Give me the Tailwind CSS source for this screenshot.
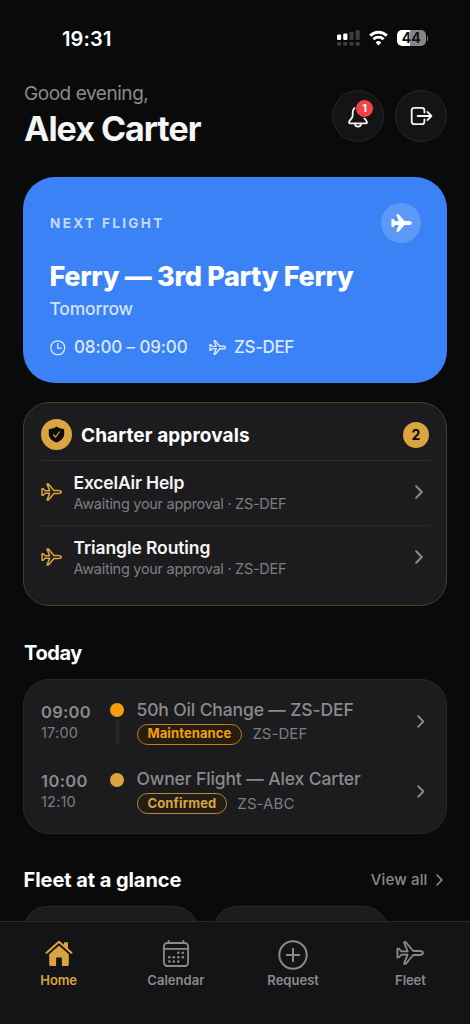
<!DOCTYPE html>
<html lang="en">
<head>
<meta charset="utf-8">
<meta name="viewport" content="width=device-width, initial-scale=1">
<title>Home</title>
<script src="https://cdn.jsdelivr.net/npm/@tailwindcss/browser@4"></script>
</head>
<body class="bg-[#0a0a0a] font-['Inter',sans-serif] text-white antialiased">
<svg class="hidden">
  <symbol id="plane" viewBox="0 0 28 24"><path d="M1.4 7.6H2.8L5.4 10.3H11.6L8 1.2H9.9L17.2 10H23.2C25.6 10.1 27 11 27 12S25.6 13.9 23.2 14H17.2L9.9 22.8H8L11.6 13.7H5.4L2.8 16.4H1.4V12Z" stroke-linejoin="round"/></symbol>
  <symbol id="chev" viewBox="0 0 8 14"><path d="M1.2 1.2L6.8 7L1.2 12.8" fill="none" stroke="currentColor" stroke-width="2" stroke-linecap="round" stroke-linejoin="round"/></symbol>
</svg>
<div class="flex h-[1024px] w-[470px] flex-col overflow-hidden">

  <!-- Status bar -->
  <div class="flex h-[76px] shrink-0 items-center justify-between pr-[42px] pl-[62px]">
    <span class="pt-px text-[20px] leading-6 font-semibold tracking-[0.16px]">19:31</span>
    <div class="flex items-center">
      <svg class="mr-[9px] h-4 w-[23px]" viewBox="0 0 23 16">
        <g fill="#fff"><rect x="0" y="4.5" width="4.2" height="5.5" rx="1.2"/><rect x="6.2" y="3.4" width="4.2" height="6.6" rx="1.2"/></g>
        <g fill="#3c3c3c"><rect x="12.4" y="1.8" width="4.2" height="8.2" rx="1.2"/><rect x="18.6" y="0" width="4.2" height="10" rx="1.2"/><rect x="0" y="12" width="4.2" height="3.8" rx="1.2"/><rect x="6.2" y="12" width="4.2" height="3.8" rx="1.2"/><rect x="12.4" y="12" width="4.2" height="3.8" rx="1.2"/><rect x="18.6" y="12" width="4.2" height="3.8" rx="1.2"/></g>
      </svg>
      <svg class="mr-[9px] h-4 w-[19px]" viewBox="0 0 19 16" fill="none" stroke="#fff" stroke-width="2.9"><path d="M1.2 5.6A11.8 11.8 0 0 1 17.8 5.6"/><path d="M4.4 9.2A7.3 7.3 0 0 1 14.6 9.2"/><path d="M9.5 15.6L6.7 12.4A4 4 0 0 1 12.3 12.4Z" fill="#fff" stroke="none"/></svg>
      <div class="flex h-4 w-[28.5px] items-center justify-center rounded-[5px] bg-linear-to-r from-white from-45% to-[#868686] to-45% text-[14px] leading-4 font-bold text-[#111]">44</div>
      <div class="ml-[1px] h-[5px] w-[1.5px] rounded-r-full bg-[#777]"></div>
    </div>
  </div>

  <main class="flex min-h-0 flex-1 flex-col overflow-hidden px-[23px]">
    <!-- Greeting -->
    <header class="flex h-[79px] shrink-0 items-start justify-between">
      <div class="pt-[6px] pl-px">
        <p class="text-[19px] leading-6 tracking-[-0.45px] text-[#8a8a8d]">Good evening,</p>
        <h1 class="text-[34px] leading-[46px] font-bold tracking-[-1px] text-[#f5f5f5]">Alex Carter</h1>
      </div>
      <div class="flex gap-[11px] pt-[14px]">
        <button class="relative flex size-[52px] items-center justify-center rounded-full border border-[#262628] bg-[#141416]">
          <svg class="size-6" viewBox="0 0 24 24" fill="none" stroke="#f5f5f5" stroke-width="1.8" stroke-linecap="round" stroke-linejoin="round"><path d="M12 3.2C8.4 3.2 6.7 5.8 6.7 9V11.6C6.7 14.4 3 16.2 3 18.4C3 19 3.4 19.3 4 19.3H20C20.6 19.3 21 19 21 18.4C21 16.2 17.3 14.4 17.3 11.6V9C17.3 5.8 15.6 3.2 12 3.2Z"/><path d="M9 19.6C9 21.5 10.3 22.7 12 22.7S15 21.5 15 19.6"/></svg>
          <span class="absolute top-[8px] left-[22px] flex size-[19px] items-center justify-center rounded-full border border-[#141416] bg-[#ef4444] text-[11px] leading-none font-bold">1</span>
        </button>
        <button class="flex size-[52px] items-center justify-center rounded-full border border-[#262628] bg-[#141416]">
          <svg class="size-6" viewBox="0 0 24 24" fill="none" stroke="#f5f5f5" stroke-width="1.8" stroke-linecap="round" stroke-linejoin="round"><path d="M15.4 8.6V6.2A2.4 2.4 0 0 0 13 3.8H5.1A2.4 2.4 0 0 0 2.7 6.2V17.8A2.4 2.4 0 0 0 5.1 20.2H13A2.4 2.4 0 0 0 15.4 17.8V15.4"/><path d="M8.6 12H22.2M18.4 7.9L22.4 12L18.4 16.1"/></svg>
        </button>
      </div>
    </header>

    <!-- Next flight -->
    <section class="mt-[22px] flex h-[206px] shrink-0 flex-col rounded-[32px] bg-[#3b82f6] pt-[26px] pr-[26px] pl-[27px]">
      <div class="flex h-10 items-center justify-between">
        <span class="text-[13.5px] font-bold tracking-[2.35px] text-[#c3dafc]">NEXT FLIGHT</span>
        <span class="flex size-10 items-center justify-center rounded-full bg-white/18"><svg class="h-[18px] w-[21px] fill-white stroke-white stroke-[1.6]"><use href="#plane"/></svg></span>
      </div>
      <h2 class="mt-[16px] -ml-[0.5px] text-[27px] leading-[36px] font-extrabold tracking-[-0.32px] whitespace-nowrap">Ferry — 3rd Party Ferry</h2>
      <p class="mt-[2px] -ml-[0.5px] text-[17.5px] leading-6 font-medium tracking-[-0.2px] text-[#d3e3fd]">Tomorrow</p>
      <div class="mt-[15px] flex h-6 items-center text-[17px] font-medium text-[#dbe9fe]">
        <svg class="mr-[8.5px] size-[15.5px]" viewBox="0 0 16 16" fill="none" stroke="currentColor" stroke-width="1.3" stroke-linecap="round"><circle cx="8" cy="8" r="7.2"/><path d="M8 3.6V8.4H11.4"/></svg>
        <span class="mr-[21px] tracking-[-0.12px]">08:00 – 09:00</span>
        <svg class="mr-2 mb-px h-[15px] w-[17.5px] fill-none stroke-current stroke-[2.1]"><use href="#plane"/></svg>
        <span class="tracking-[-0.4px]">ZS-DEF</span>
      </div>
    </section>

    <!-- Charter approvals -->
    <section class="mt-[19px] flex h-[204px] shrink-0 flex-col rounded-[26px] border border-[#4a3d22] bg-[#1c1c1e] pt-4 pr-4 pl-[16.5px]">
      <div class="flex h-[31px] items-center">
        <span class="flex size-[31px] items-center justify-center rounded-full bg-[#d9a441]">
          <svg class="h-[17px] w-[17px]" viewBox="0 0 17 17"><path d="M8.5.6C10.6 2.2 13 2.8 15.4 3C15.9 3 16.2 3.4 16.2 3.9V8C16.2 12.2 12.8 14.8 8.5 16.6C4.2 14.8.8 12.2.8 8V3.9C.8 3.4 1.1 3 1.6 3C4 2.8 6.4 2.2 8.5.6Z" fill="#0c0a06"/><path d="M5.6 9L7.6 11L11.3 6" fill="none" stroke="#d9a441" stroke-width="1.2" stroke-linecap="round"/></svg>
        </span>
        <span class="ml-[9.5px] pt-[2px] text-[19px] leading-6 font-bold tracking-[0.1px]">Charter approvals</span>
        <span class="mr-[1px] ml-auto flex size-[26px] items-center justify-center rounded-full bg-[#d9a441] text-[14px] font-bold text-[#0c0a06]">2</span>
      </div>
      <div class="mt-[10px] flex h-[64.5px] items-center border-t border-[#2b2b2d]">
        <svg class="mb-[2px] h-[18px] w-[21px] fill-none stroke-[#d9a441] stroke-[2]"><use href="#plane"/></svg>
        <div class="ml-3 flex flex-col">
          <span class="text-[17.5px] leading-[22px] font-semibold tracking-[-0.17px] text-[#f5f5f5]">ExcelAir Help</span>
          <span class="text-[14.5px] leading-[20px] tracking-[-0.28px] whitespace-nowrap text-[#7e7e82]">Awaiting your approval · ZS-DEF</span>
        </div>
        <svg class="mr-[7px] mb-[2px] ml-auto h-[14px] w-2 text-[#8a8a8d]"><use href="#chev"/></svg>
      </div>
      <div class="flex h-[65px] items-center border-t border-[#2b2b2d]">
        <svg class="mb-[2px] h-[18px] w-[21px] fill-none stroke-[#d9a441] stroke-[2]"><use href="#plane"/></svg>
        <div class="ml-3 flex flex-col">
          <span class="text-[17.5px] leading-[22px] font-semibold tracking-[-0.09px] text-[#f5f5f5]">Triangle Routing</span>
          <span class="text-[14.5px] leading-[20px] tracking-[-0.28px] whitespace-nowrap text-[#7e7e82]">Awaiting your approval · ZS-DEF</span>
        </div>
        <svg class="mr-[7px] mb-[2px] ml-auto h-[14px] w-2 text-[#8a8a8d]"><use href="#chev"/></svg>
      </div>
    </section>

    <!-- Today -->
    <h3 class="mt-[34px] shrink-0 pl-px text-[20px] leading-[26px] font-bold tracking-[-0.4px]">Today</h3>
    <section class="mt-[13px] flex h-[155px] shrink-0 flex-col gap-[13px] rounded-[26px] border border-[#28282a] bg-[#1c1c1e] pt-[14px] pr-[22px] pl-[17px]">
      <div class="flex h-[56px] items-center">
        <div class="flex w-[69px] flex-col text-[#8a8a8d]">
          <span class="text-[16.5px] leading-[21px] font-semibold tracking-[0.3px]">09:00</span>
          <span class="text-[14.5px] leading-5 tracking-[0.2px] text-[#7e7e82]">17:00</span>
        </div>
        <div class="flex w-[14px] flex-col items-center gap-[3px] self-start pt-[9px]">
          <span class="size-[14px] rounded-full bg-[#f59e0b]"></span>
          <span class="h-6 w-[3px] bg-[#28282a]"></span>
        </div>
        <div class="mb-[2px] ml-[12.5px] flex flex-col gap-[2px]">
          <span class="text-[17.5px] leading-6 font-medium tracking-[-0.13px] whitespace-nowrap text-[#8a8a8d]">50h Oil Change — ZS-DEF</span>
          <div class="flex items-center gap-[10px]">
            <span class="flex h-[21px] items-center rounded-full border-[1.5px] border-[#c4800f] bg-[#251d10] px-[10px] text-[13px] font-bold tracking-[0.1px] text-[#f59e0b]">Maintenance</span>
            <span class="text-[15px] leading-5 tracking-[0.05px] text-[#7e7e82]">ZS-DEF</span>
          </div>
        </div>
        <svg class="mb-px ml-auto h-[13px] w-[7.5px] text-[#8a8a8d]"><use href="#chev"/></svg>
      </div>
      <div class="flex h-[56px] items-center">
        <div class="flex w-[69px] flex-col pt-px text-[#8a8a8d]">
          <span class="text-[16.5px] leading-[21px] font-semibold tracking-[0.4px]">10:00</span>
          <span class="text-[14.5px] leading-5 tracking-[0.2px] text-[#7e7e82]">12:10</span>
        </div>
        <div class="flex w-[14px] flex-col items-center self-start pt-[9.5px]">
          <span class="size-[14px] rounded-full bg-[#d9a441]"></span>
        </div>
        <div class="mb-px ml-[12.5px] flex flex-col gap-[2px]">
          <span class="text-[17.5px] leading-6 font-medium tracking-[-0.12px] whitespace-nowrap text-[#8a8a8d]">Owner Flight — Alex Carter</span>
          <div class="flex items-center gap-[10px]">
            <span class="flex h-[21px] items-center rounded-full border-[1.5px] border-[#b58a39] bg-[#221e15] px-[10px] text-[13px] font-bold tracking-[0.13px] text-[#d9a441]">Confirmed</span>
            <span class="text-[15px] leading-5 tracking-[0.1px] text-[#7e7e82]">ZS-ABC</span>
          </div>
        </div>
        <svg class="ml-auto h-[13px] w-[7.5px] text-[#8a8a8d]"><use href="#chev"/></svg>
      </div>
    </section>

    <!-- Fleet -->
    <div class="mt-[33px] flex h-[26px] shrink-0 items-center justify-between pr-[4.5px]">
      <h3 class="pl-[0.5px] text-[20px] leading-[26px] font-bold tracking-[-0.06px]">Fleet at a glance</h3>
      <span class="flex items-center gap-2 text-[15px] font-medium tracking-[0.15px] text-[#8a8a8d]">View all<svg class="h-[12px] w-[7px]"><use href="#chev"/></svg></span>
    </div>
    <div class="mt-[13px] flex shrink-0 gap-[15px]">
      <div class="h-20 w-[175px] rounded-[24px] border border-[#28282a] bg-[#1c1c1e]"></div>
      <div class="h-20 w-[175px] rounded-[24px] border border-[#28282a] bg-[#1c1c1e]"></div>
    </div>
  </main>

  <!-- Tab bar -->
  <nav class="grid h-[103px] shrink-0 grid-cols-4 border-t border-[#28282a] bg-[#141416] pt-4 pr-px text-[13px] leading-4 font-semibold text-[#8a8a8d]">
    <a class="flex flex-col items-center gap-[3px] text-[#d9a441]">
      <span class="flex h-[31px] items-center"><svg class="h-[27px] w-[28px]" viewBox="0 0 28 27"><path d="M4.2 14.2L14 5.4L23.8 14.2V24.6A1.4 1.4 0 0 1 22.4 26H16.9V17.4H11.1V26H5.6A1.4 1.4 0 0 1 4.2 24.6Z" fill="currentColor"/><path d="M19 2.2H23V9L19 5.4Z" fill="currentColor"/><path d="M1.6 12.7L14 1.8L26.4 12.7" fill="none" stroke="currentColor" stroke-width="2.1" stroke-linecap="round" stroke-linejoin="round"/><path d="M3 14.2L14 4.4L25 14.2" fill="none" stroke="#141416" stroke-width="1"/></svg></span>
      <span class="tracking-[-0.1px]">Home</span>
    </a>
    <a class="flex flex-col items-center gap-[3px]">
      <span class="flex h-[31px] items-center"><svg class="h-[27px] w-[26px]" viewBox="0 0 26 27" fill="none" stroke="currentColor" stroke-width="1.8"><rect x=".9" y="3" width="24.2" height="23" rx="3.4"/><path d="M1 8.8H25M5.6 1V3M20.4 1V3" stroke-linecap="round"/><g fill="currentColor" stroke="none"><circle cx="15.3" cy="12.8" r="1.3"/><circle cx="19.8" cy="12.8" r="1.3"/><circle cx="6.3" cy="17.2" r="1.3"/><circle cx="10.8" cy="17.2" r="1.3"/><circle cx="15.3" cy="17.2" r="1.3"/><circle cx="19.8" cy="17.2" r="1.3"/><circle cx="6.3" cy="21.6" r="1.3"/><circle cx="10.8" cy="21.6" r="1.3"/><circle cx="15.3" cy="21.6" r="1.3"/></g></svg></span>
      <span class="tracking-[0.05px]">Calendar</span>
    </a>
    <a class="flex flex-col items-center gap-[2px]">
      <span class="flex h-[32px] items-end"><svg class="size-[30px]" viewBox="0 0 30 30" fill="none" stroke="currentColor" stroke-width="2" stroke-linecap="round"><circle cx="15" cy="15" r="13.7"/><path d="M15 8.8V21.2M8.8 15H21.2"/></svg></span>
      <span class="tracking-[0.02px]">Request</span>
    </a>
    <a class="flex flex-col items-center gap-[3px]">
      <span class="flex h-[31px] items-center pb-[2px]"><svg class="h-[24px] w-[28px] fill-none stroke-current stroke-[1.8]"><use href="#plane"/></svg></span>
      <span class="tracking-[-0.1px]">Fleet</span>
    </a>
  </nav>
</div>
</body>
</html>
